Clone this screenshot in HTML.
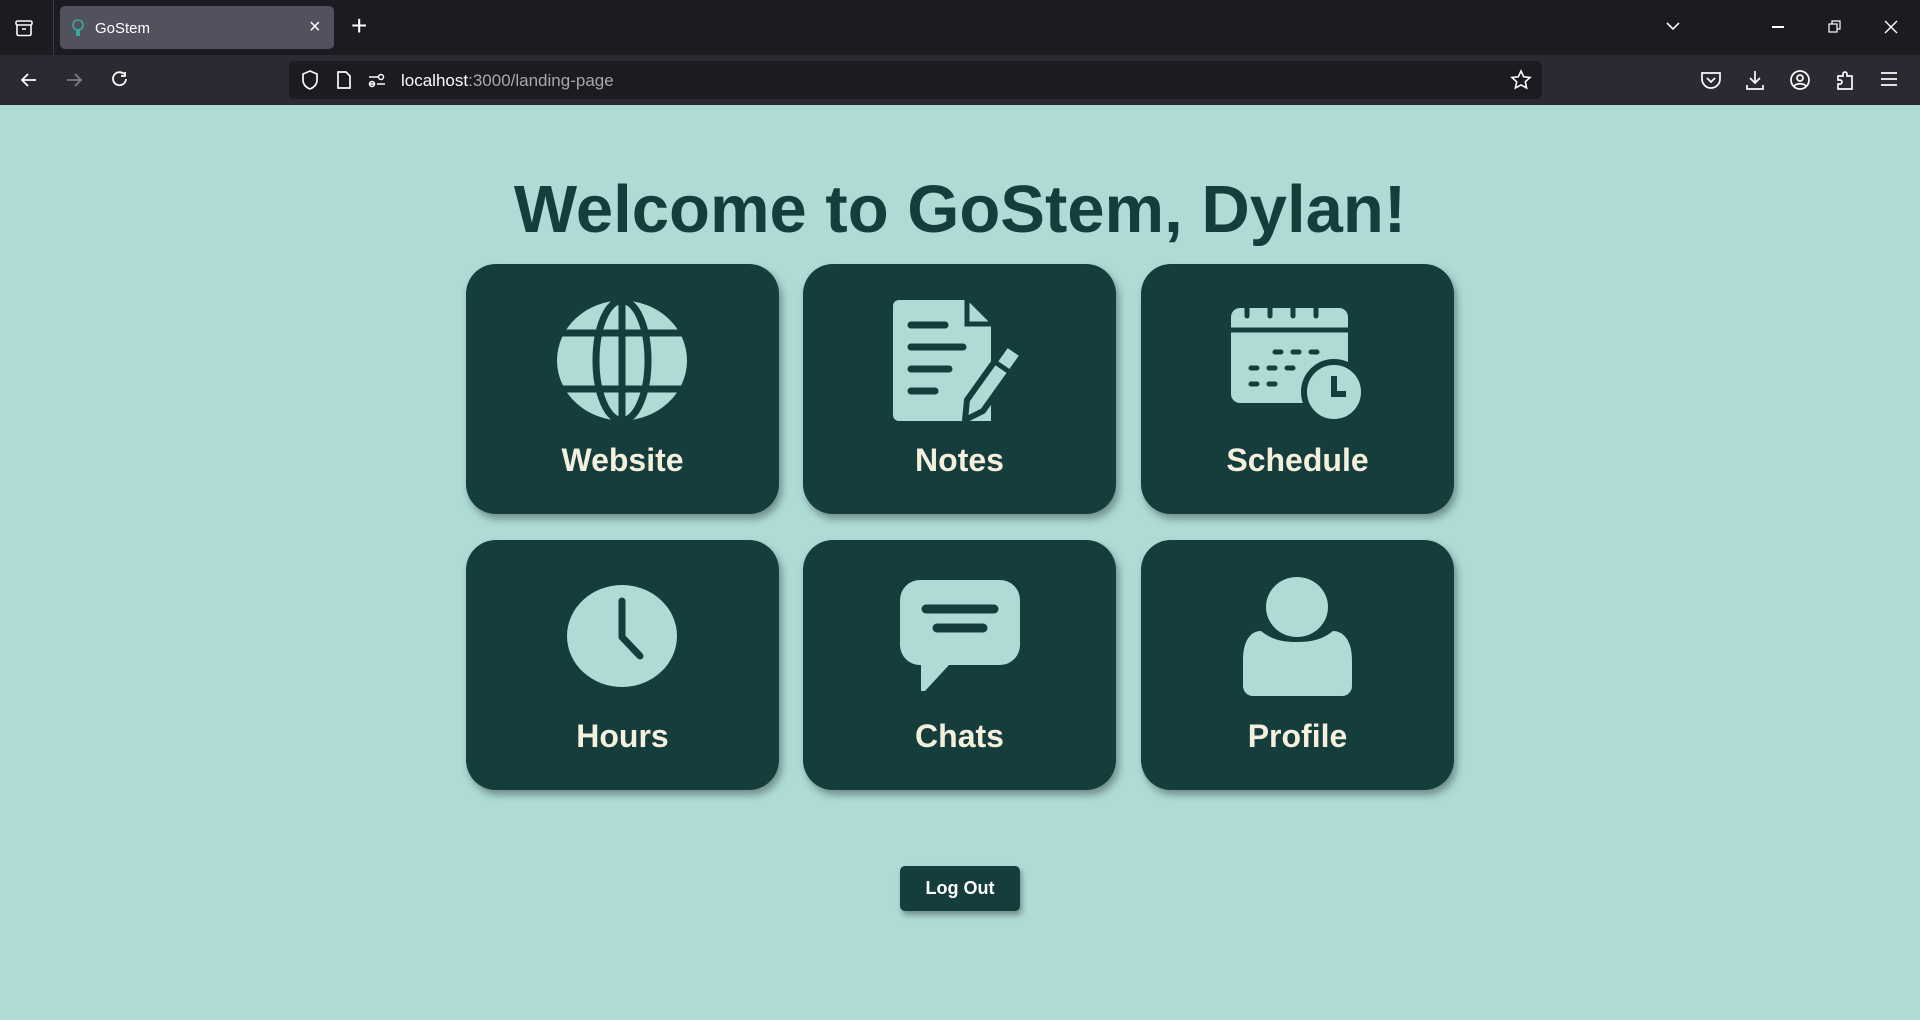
<!DOCTYPE html>
<html><head><meta charset="utf-8"><style>
*{margin:0;padding:0;box-sizing:border-box}
html,body{width:1920px;height:1020px;overflow:hidden;background:#aedbd6;font-family:"Liberation Sans",sans-serif}
.tabbar{position:absolute;left:0;top:0;width:1920px;height:55px;background:#1c1b22}
.toolbar{position:absolute;left:0;top:55px;width:1920px;height:50px;background:#2b2a33}
.tab{position:absolute;left:60px;top:6px;width:274px;height:43px;background:#52525e;border-radius:5px;color:#fff;font-size:15px}
.url{position:absolute;left:289px;top:61px;width:1253px;height:38px;background:#1c1b22;border-radius:5px}
.ic{position:absolute}
h1{position:absolute;left:0;width:1920px;top:168px;text-align:center;font-size:67px;font-weight:bold;color:#143d3c;line-height:84px}
.card{position:absolute;width:313px;height:250px;background:#143d3c;border-radius:30px;box-shadow:3px 5px 8px rgba(0,0,0,.35)}
.card svg{position:absolute;left:90px;top:36px;overflow:visible}
.card span{position:absolute;left:0;width:100%;top:176px;text-align:center;font-size:32px;font-weight:bold;color:#f5efdd;line-height:40px}
.btn{position:absolute;left:900px;top:866px;width:120px;height:45px;background:#143d3c;border-radius:5px;color:#fff;font-weight:bold;font-size:18px;text-align:center;line-height:45px;box-shadow:2px 4px 6px rgba(0,0,0,.35)}
</style></head><body>
<div class="tabbar">
<svg class="ic" style="left:14px;top:18px" width="20" height="20" viewBox="0 0 20 20" fill="none" stroke="#fbfbfe" stroke-width="1.6"><rect x="2" y="3" width="16" height="4" rx="1.5"/><path d="M3 7v9a1.5 1.5 0 0 0 1.5 1.5h11A1.5 1.5 0 0 0 17 16V7M8 11h4"/></svg>
<div style="position:absolute;left:53px;top:0;width:1px;height:55px;background:#3a3944"></div>
<div class="tab"><svg class="ic" style="left:12px;top:13px" width="12" height="18" viewBox="0 0 12 18"><circle cx="6" cy="6" r="5" fill="none" stroke="#3aa7a0" stroke-width="1.6"/><rect x="4" y="11" width="4" height="6" fill="#3aa7a0"/></svg><span style="position:absolute;left:35px;top:14px">GoStem</span><span style="position:absolute;left:249px;top:10px;font-size:20px">×</span></div>
<span style="position:absolute;left:351px;top:10px;color:#fff;font-size:28px;font-weight:300">+</span>
<svg class="ic" style="left:1665px;top:20px" width="16" height="12" viewBox="0 0 16 12" fill="none" stroke="#fbfbfe" stroke-width="1.6"><path d="M2 3l6 6 6-6"/></svg>
<div style="position:absolute;left:1772px;top:26px;width:12px;height:1.5px;background:#fff"></div>
<svg class="ic" style="left:1828px;top:20px" width="14" height="14" viewBox="0 0 14 14" fill="none" stroke="#fff" stroke-width="1.2"><rect x="1" y="4" width="8" height="8"/><path d="M4 4V1h8v8H9"/></svg>
<svg class="ic" style="left:1884px;top:20px" width="14" height="14" viewBox="0 0 14 14" stroke="#fff" stroke-width="1.4"><path d="M1 1l12 12M13 1L1 13"/></svg>
</div>
<div class="toolbar">
<svg class="ic" style="left:19px;top:15px" width="20" height="20" viewBox="0 0 20 20" fill="none" stroke="#fbfbfe" stroke-width="1.8"><path d="M17 10H3M9 4l-6 6 6 6"/></svg>
<svg class="ic" style="left:64px;top:15px" width="20" height="20" viewBox="0 0 20 20" fill="none" stroke="#7d7c85" stroke-width="1.8"><path d="M3 10h14M11 4l6 6-6 6"/></svg>
<svg class="ic" style="left:110px;top:15px" width="20" height="20" viewBox="0 0 20 20" fill="none" stroke="#fbfbfe" stroke-width="1.8"><path d="M16 9a6.5 6.5 0 1 1-2-5M15 2v4h-4"/></svg>
</div>
<div class="url">
<svg class="ic" style="left:11px;top:8px" width="20" height="22" viewBox="0 0 20 22" fill="none" stroke="#fbfbfe" stroke-width="1.7"><path d="M10 2l7 3v6c0 5-4 8-7 9-3-1-7-4-7-9V5z"/></svg>
<svg class="ic" style="left:47px;top:9px" width="16" height="20" viewBox="0 0 16 20" fill="none" stroke="#fbfbfe" stroke-width="1.7"><path d="M2 2h8l4 4v12H2z"/></svg>
<svg class="ic" style="left:79px;top:11px" width="18" height="16" viewBox="0 0 18 16" fill="none" stroke="#fbfbfe" stroke-width="1.5"><path d="M1 5h9M1 12h5"/><circle cx="13" cy="5" r="2.5"/><circle cx="9" cy="12" r="2.5" transform="translate(-5 0)"/><path d="M9 12h8"/></svg>
<span style="position:absolute;left:112px;top:10px;font-size:17px;color:#fbfbfe">localhost<span style="color:#a8a7ae">:3000/landing-page</span></span>
<svg class="ic" style="left:1221px;top:8px" width="22" height="22" viewBox="0 0 22 22" fill="none" stroke="#fbfbfe" stroke-width="1.6"><path d="M11 2l2.7 5.8 6.3.7-4.7 4.3 1.3 6.2L11 15.9 5.4 19l1.3-6.2L2 8.5l6.3-.7z"/></svg>
</div>
<svg class="ic" style="left:1700px;top:70px" width="22" height="20" viewBox="0 0 22 20" fill="none" stroke="#fbfbfe" stroke-width="1.7"><path d="M2 3h18v6a9 9 0 0 1-18 0z"/><path d="M7 8l4 4 4-4"/></svg>
<svg class="ic" style="left:1745px;top:69px" width="20" height="22" viewBox="0 0 20 22" fill="none" stroke="#fbfbfe" stroke-width="1.7"><path d="M10 2v12M5 9l5 5 5-5M2 16v4h16v-4"/></svg>
<svg class="ic" style="left:1789px;top:69px" width="22" height="22" viewBox="0 0 22 22" fill="none" stroke="#fbfbfe" stroke-width="1.7"><circle cx="11" cy="11" r="9"/><circle cx="11" cy="9" r="3"/><path d="M5 17c3-3 9-3 12 0"/></svg>
<svg class="ic" style="left:1835px;top:69px" width="20" height="22" viewBox="0 0 20 22" fill="none" stroke="#fbfbfe" stroke-width="1.7"><path d="M3 20v-5h2a2 2 0 0 0 0-4H3V7h5V5a2 2 0 0 1 4 0v2h5v13z"/></svg>
<svg class="ic" style="left:1880px;top:71px" width="18" height="16" viewBox="0 0 18 16" stroke="#fbfbfe" stroke-width="1.7"><path d="M1 2h16M1 8h16M1 14h16"/></svg>

<h1>Welcome to GoStem, Dylan!</h1>

<div class="card" style="left:466px;top:264px">
<svg width="132" height="121" viewBox="0 0 132 121"><ellipse cx="66" cy="60.5" rx="65" ry="60" fill="#aedbd6"/><g fill="none" stroke="#143d3c" stroke-width="7"><ellipse cx="66" cy="60.5" rx="26" ry="60"/><path d="M66 0v121M0 33h132M0 89h132"/></g></svg>
<span>Website</span></div>
<div class="card" style="left:803px;top:264px">
<svg width="132" height="121" viewBox="0 0 132 121"><path d="M6 0h68l24 24v97H6a6 6 0 0 1-6-6V6a6 6 0 0 1 6-6z" fill="#aedbd6"/><path d="M74 0v24h24" fill="none" stroke="#143d3c" stroke-width="5"/><g stroke="#143d3c" stroke-width="7" stroke-linecap="round"><path d="M18 25h34M18 47h52M18 69h38M18 91h24"/></g><path d="M114 44l16 11-40 56-18 9 2-20z" fill="#aedbd6" stroke="#143d3c" stroke-width="6" stroke-linejoin="round"/><path d="M102 62l16 11" stroke="#143d3c" stroke-width="5"/></svg>
<span>Notes</span></div>
<div class="card" style="left:1141px;top:264px">
<svg width="132" height="121" viewBox="0 0 132 121"><rect x="0" y="8" width="117" height="95" rx="9" fill="#aedbd6"/><path d="M0 30h117" stroke="#143d3c" stroke-width="5"/><g stroke="#143d3c" stroke-width="5" stroke-linecap="round"><path d="M16 4v12M39 4v12M62 4v12M85 4v12"/><path d="M44 52h6M62 52h6M80 52h6M20 68h6M38 68h6M56 68h6M20 84h6M38 84h6"/></g><circle cx="103" cy="92" r="30" fill="#aedbd6" stroke="#143d3c" stroke-width="6"/><path d="M103 76v18h12" fill="none" stroke="#143d3c" stroke-width="6"/></svg>
<span>Schedule</span></div>

<div class="card" style="left:466px;top:540px">
<svg width="132" height="121" viewBox="0 0 132 121"><ellipse cx="66" cy="60" rx="55" ry="51" fill="#aedbd6"/><path d="M66 25v36l18 19" fill="none" stroke="#143d3c" stroke-width="7" stroke-linecap="round" stroke-linejoin="round"/></svg>
<span>Hours</span></div>
<div class="card" style="left:803px;top:540px">
<svg width="132" height="121" viewBox="0 0 132 121"><path d="M27 4h80a20 20 0 0 1 20 20v45a20 20 0 0 1-20 20H56l-24 26h-4V89a20 20 0 0 1-21-20V24A20 20 0 0 1 27 4z" fill="#aedbd6"/><g stroke="#143d3c" stroke-width="9" stroke-linecap="round"><path d="M33 33h68M44 52h46"/></g></svg>
<span>Chats</span></div>
<div class="card" style="left:1141px;top:540px">
<svg width="132" height="121" viewBox="0 0 132 121"><ellipse cx="66" cy="31" rx="31" ry="30" fill="#aedbd6"/><path d="M22 120a10 10 0 0 1-10-10V84c0-20 8-29 18-29 10 8 20 11 36 11s26-3 36-11c10 0 19 9 19 29v26a10 10 0 0 1-10 10z" fill="#aedbd6"/></svg>
<span>Profile</span></div>

<div class="btn">Log Out</div>
</body></html>
